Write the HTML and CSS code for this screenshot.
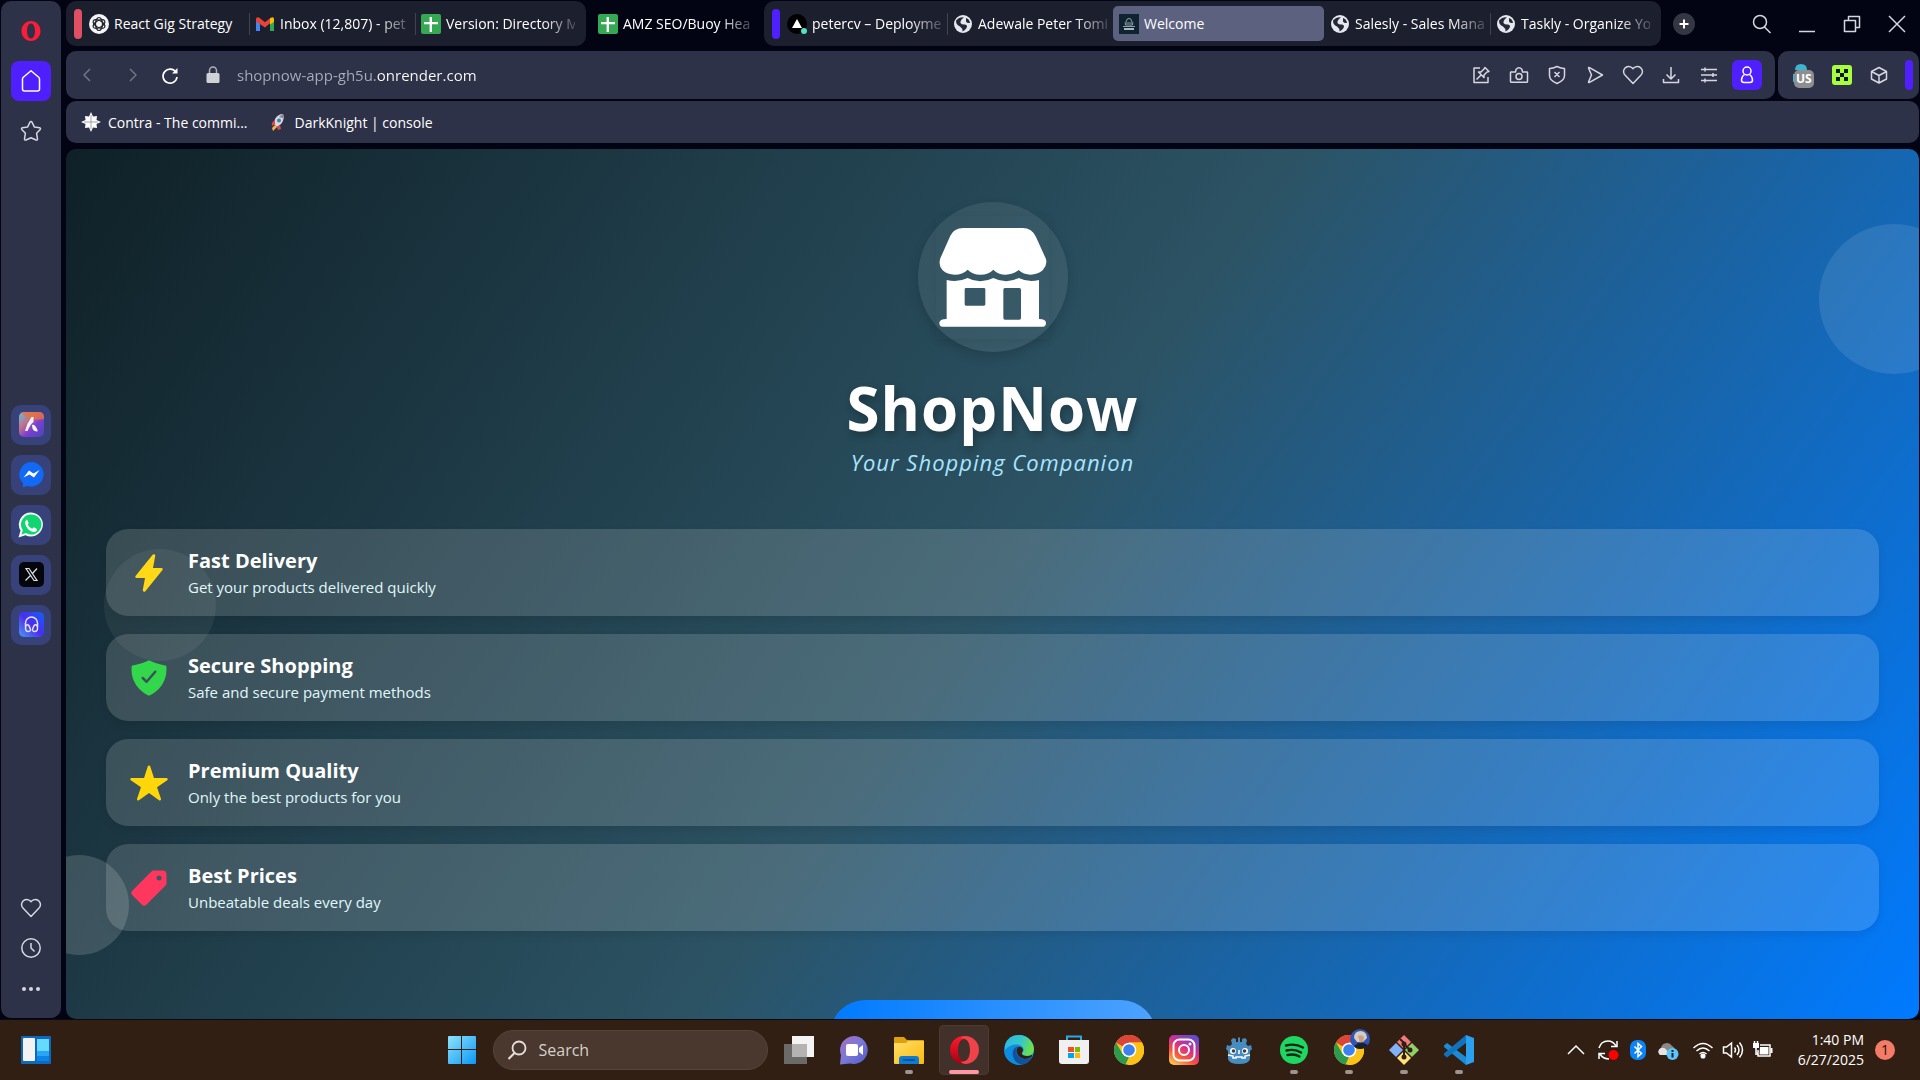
FILE: index.html
```html
<!DOCTYPE html>
<html lang="en">
<head>
<meta charset="utf-8">
<title>Welcome</title>
<link rel="stylesheet" href="styles.css">
</head>
<body>
<svg class="defs" width="0" height="0" aria-hidden="true">
  <defs>
    <linearGradient id="g-start" x1="0" y1="0" x2="1" y2="1"><stop offset="0" stop-color="#8fe2fb"/><stop offset="1" stop-color="#0a98f5"/></linearGradient>
    <linearGradient id="g-insta" x1=".2" y1="1" x2=".8" y2="0"><stop offset="0" stop-color="#ffc24a"/><stop offset=".3" stop-color="#f9553a"/><stop offset=".6" stop-color="#cf2f93"/><stop offset="1" stop-color="#5a4fd0"/></linearGradient>
    <linearGradient id="g-edge" x1="0" y1="0" x2="1" y2=".3"><stop offset="0" stop-color="#2bb4e8"/><stop offset=".6" stop-color="#36c8c8"/><stop offset="1" stop-color="#6be04e"/></linearGradient>
    <linearGradient id="g-opera" x1="0" y1="0" x2="0" y2="1"><stop offset="0" stop-color="#ff1b2d"/><stop offset="1" stop-color="#a70014"/></linearGradient>
    <linearGradient id="g-chat" x1="0" y1="0" x2="1" y2="1"><stop offset="0" stop-color="#a56fc0"/><stop offset=".5" stop-color="#7a78d8"/><stop offset="1" stop-color="#5059c9"/></linearGradient>
    <linearGradient id="g-folder" x1="0" y1="0" x2="1" y2="1"><stop offset="0" stop-color="#ffdf6b"/><stop offset="1" stop-color="#fbb90c"/></linearGradient>
    <linearGradient id="g-aria" x1="0" y1="0" x2="1" y2="1"><stop offset="0" stop-color="#5fc4dc"/><stop offset=".35" stop-color="#c0708c"/><stop offset=".6" stop-color="#7a3fd0"/><stop offset="1" stop-color="#4747b8"/></linearGradient>
    <linearGradient id="g-player" x1="0" y1="1" x2="1" y2="0"><stop offset="0" stop-color="#4a9cf0"/><stop offset=".5" stop-color="#4b2df0"/><stop offset="1" stop-color="#0f62f5"/></linearGradient>
    <symbol id="globe" viewBox="0 0 20 20"><circle cx="10" cy="10" r="9" fill="#e6e8ee"/><path d="M3 6.500Q7 2 11 3.500Q7 6 7.500 9Q9 11 12 10.500Q15 11 13.500 14Q12 16.500 9.500 17.500Q9.500 14 7 12.500Q3 11 3 6.500ZM13 4Q16.500 5 17 9Q14 9.500 13 7.500Z" fill="#242838"/></symbol>
    <symbol id="sheets" viewBox="0 0 20 20"><rect width="20" height="20" rx="2" fill="#34a853"/><path d="M8.600 3h2.400v5h6v2.200h-6V18H8.600v-7.800H3V8h5.600z" fill="#fff"/></symbol>
    <symbol id="chrome" viewBox="0 0 30 30"><circle cx="15" cy="15" r="15" fill="#fbc116"/><path d="M15 15 2 7.500A15 15 0 0 1 28 7.500H15z" fill="#db4437"/><path d="M2 7.500 8.500 18.700 15 22 11.500 29.600A15 15 0 0 1 2 7.500z" fill="#2d9b4f"/><path d="M15 7.500H28A15 15 0 0 1 14 30L21 18.500z" fill="#fbc116"/><circle cx="15" cy="15" r="7.300" fill="#fff"/><circle cx="15" cy="15" r="5.800" fill="#3b82ee"/></symbol>
  </defs>
</svg>

<div class="desktop">
  <div class="browser">
    <nav class="sidebar">
      <button class="side-btn" type="button"><svg width="22" height="22" viewBox="0 0 22 22"><path fill-rule="evenodd" fill="#fb1c37" d="M11 1c5.500 0 9.500 4.500 9.500 10s-4 10-9.500 10S1.500 16.500 1.500 11 5.500 1 11 1zm0 2.500c-2.500 0-4 3.300-4 7.500s1.500 7.500 4 7.500 4-3.300 4-7.500-1.500-7.500-4-7.500z"/></svg></button>
      <button class="side-btn side-home" type="button"><svg class="line" width="24" height="24" viewBox="0 0 24 24"><path d="M3.500 10Q3.500 9 4.300 8.300L12 1.800l7.700 6.500q.8.700.8 1.700v10q0 2-2 2h-13q-2 0-2-2z"/></svg></button>
      <button class="side-btn" type="button"><svg class="line" width="24" height="24" viewBox="0 0 24 24"><path d="M12 2.500q.7 0 1 .7l2.300 4.700 5.300.8q1.400.5.600 1.700l-3.600 3.900.9 5.600q0 1.600-1.500 1.100L12 18.700 7 21q-1.500.5-1.500-1.100l.9-5.600-3.600-3.900q-.8-1.200.6-1.700l5.300-.8L11 3.200q.3-.7 1-.7z"/></svg></button>
      <div class="side-apps">
        <button class="side-btn side-app" type="button"><svg width="25" height="25" viewBox="0 0 25 25"><rect width="25" height="25" rx="5" fill="url(#g-aria)"/><path d="M5 0h15q5 0 5 5v2Q12 10 2 1q1-1 3-1z" fill="#e8703f" opacity=".8"/><path d="M12.500 5h2v5q-3 2-6 9H6q2-8 6.500-14zM13 13q3-1 5.500 5v1.500Q13 20 13 13z" fill="#f3f3f8"/></svg></button>
        <button class="side-btn side-app" type="button"><svg width="25" height="25" viewBox="0 0 25 25"><path d="M12.500 0a12.300 12.300 0 1 1-4 24L4 25.200V21A12.300 12.300 0 0 1 12.500 0z" fill="#1169f5"/><path d="M4.500 15.500 10 8.500l4.500 3L20.500 8 15 15.500 10.500 12.500z" fill="#fff"/></svg></button>
        <button class="side-btn side-app" type="button"><svg width="26" height="26" viewBox="0 0 26 26"><path d="M13.500.5a12 12 0 1 1-6 22.700L.5 25.500l2-7A12 12 0 0 1 13.500.5z" fill="#f4f6f8"/><path d="M13.500 2.500a10 10 0 1 1-5.500 18.400L3.500 22.500l1.300-4.300A10 10 0 0 1 13.500 2.500z" fill="#0fd670"/><path d="M9 7.500l1.700 3.500-1 1.500q1.300 3 4.500 4.300l1.500-1.500 3.300 1.700q0 3-3.500 3Q8.500 18.500 7 11q0-2.500 2-3.500z" fill="#fff"/></svg></button>
        <button class="side-btn side-app" type="button"><svg width="25" height="25" viewBox="0 0 25 25"><rect width="25" height="25" rx="5" fill="#05060b"/><path d="M7 6.500h3l8 12h-3zM18 6.500l-5 5.500M11.500 13.500l-5 5" fill="none" stroke="#dfe1e8" stroke-width="1.200"/></svg></button>
        <button class="side-btn side-app" type="button"><svg width="25" height="25" viewBox="0 0 25 25"><rect width="25" height="25" rx="5" fill="url(#g-player)"/><path d="M6.500 15v-4a6 6 0 0 1 12 0v4M9.500 13q-3-.8-3 3t3 3.500 1.500-3.500-1.500-3zM15.500 13q3-.8 3 3t-3 3.500-1.500-3.500 1.500-3z" fill="none" stroke="#e7e2ff" stroke-width="1.500"/></svg></button>
      </div>
      <div class="side-foot">
        <button class="side-btn" type="button"><svg class="line" width="22" height="22" viewBox="0 0 22 22"><path d="M11 19.500 3.200 11.300a5 5 0 0 1 6.800-7.500l1 1 1-1a5 5 0 0 1 6.800 7.500z"/></svg></button>
        <button class="side-btn" type="button"><svg class="line" width="22" height="22" viewBox="0 0 22 22"><circle cx="11" cy="11" r="9.200"/><path d="M11 6v5l3.500 3.500"/></svg></button>
        <button class="side-btn" type="button"><svg width="22" height="22" viewBox="0 0 22 22" fill="#d5d7e0"><circle cx="4" cy="12" r="2"/><circle cx="11" cy="12" r="2"/><circle cx="18" cy="12" r="2"/></svg></button>
      </div>
    </nav>

    <div class="main">
      <header class="tabstrip">
        <div class="tab-group">
          <span class="group-mark group-red"></span>
          <button class="tab" type="button"><svg width="20" height="20" viewBox="0 0 20 20"><circle cx="10" cy="10" r="10" fill="#f5f5f7"/><g fill="none" stroke="#22242c" stroke-width="1.200"><ellipse cx="10" cy="10" rx="3.500" ry="6.500"/><ellipse cx="10" cy="10" rx="3.500" ry="6.500" transform="rotate(60 10 10)"/><ellipse cx="10" cy="10" rx="3.500" ry="6.500" transform="rotate(120 10 10)"/></g></svg><span class="tab-label">React Gig Strategy</span></button>
          <button class="tab tab-ruled" type="button"><svg width="20" height="20" viewBox="0 0 20 20"><path d="M1 4.500V17h4V9z" fill="#4285f4"/><path d="M19 4.500V17h-4V9z" fill="#34a853"/><path d="M1 5.500Q1 2.500 4 3.500l6 4.800 5-4v5l-5 4.200L1 7.500z" fill="#ea4335"/><path d="M15 4.300Q19 1.500 19 5.500v2.200l-4 2.800z" fill="#fbbc04"/></svg><span class="tab-label tab-fade">Inbox (12,807) - pet</span></button>
          <button class="tab tab-ruled" type="button"><svg width="20" height="20"><use href="#sheets"/></svg><span class="tab-label tab-fade">Version: Directory M</span></button>
        </div>
        <button class="tab" type="button"><svg width="20" height="20"><use href="#sheets"/></svg><span class="tab-label tab-fade">AMZ SEO/Buoy Hea</span></button>
        <div class="tab-group">
          <span class="group-mark group-violet"></span>
          <button class="tab" type="button"><svg width="20" height="20" viewBox="0 0 20 20"><circle cx="10" cy="10" r="10" fill="#000"/><path d="M10 5l5 9H5z" fill="#fff"/><circle cx="17" cy="17" r="3" fill="#50e3c2"/></svg><span class="tab-label tab-fade">petercv – Deployme</span></button>
          <button class="tab tab-ruled" type="button"><svg width="20" height="20"><use href="#globe"/></svg><span class="tab-label tab-fade">Adewale Peter Tomi</span></button>
          <button class="tab tab-active" type="button"><svg width="20" height="20" viewBox="0 0 20 20"><rect width="20" height="20" fill="#0f2430"/><path d="M6.500 11q-1-3 1-4 0-2.500 2.500-2.500t2.500 2.500q2 1 1 4zM7 9h6M4 12.500h12" fill="none" stroke="#8fa3ad"/><path d="M5 15h10" stroke="#dfe8ec" stroke-width="1.500"/></svg><span class="tab-label">Welcome</span></button>
          <button class="tab" type="button"><svg width="20" height="20"><use href="#globe"/></svg><span class="tab-label tab-fade">Salesly - Sales Mana</span></button>
          <button class="tab tab-ruled" type="button"><svg width="20" height="20"><use href="#globe"/></svg><span class="tab-label tab-fade">Taskly - Organize Yo</span></button>
        </div>
        <button class="new-tab" type="button"><svg width="22" height="22" viewBox="0 0 22 22"><circle cx="11" cy="11" r="11" fill="#343743"/><path d="M11 6.500v9M6.500 11h9" stroke="#fff" stroke-width="2"/></svg></button>
        <div class="window-btns">
          <button class="icon-btn" type="button"><svg class="line" width="22" height="22" viewBox="0 0 22 22"><circle cx="9" cy="9" r="6.500"/><path d="M13.500 14l6 6"/></svg></button>
          <button class="icon-btn" type="button"><svg class="line" width="22" height="22" viewBox="0 0 22 22"><path d="M3 18.500h16"/></svg></button>
          <button class="icon-btn" type="button"><svg class="line" width="22" height="22" viewBox="0 0 22 22"><path d="M3.500 7.500h11v11h-11zM7.500 7V3.500h11v11H15"/></svg></button>
          <button class="icon-btn" type="button"><svg class="line" width="22" height="22" viewBox="0 0 22 22"><path d="M3 3l16 16M19 3L3 19"/></svg></button>
        </div>
      </header>

      <div class="toolbar">
        <div class="panel address">
          <button class="nav-btn dim" type="button"><svg class="line" width="20" height="20" viewBox="0 0 20 20"><path d="M13 4l-6 6 6 6"/></svg></button>
          <button class="nav-btn dim" type="button"><svg class="line" width="20" height="20" viewBox="0 0 20 20"><path d="M7 4l6 6-6 6"/></svg></button>
          <button class="nav-btn reload" type="button"><svg class="line" width="20" height="20" viewBox="0 0 20 20" stroke-width="1.700"><path d="M16 7.500A7 7 0 1 0 17 12"/><path d="M17.500 3v5.500h-5.500z" fill="#fff" stroke="none"/></svg></button>
          <svg class="lock" width="16" height="20" viewBox="0 0 16 20"><rect x="1.500" y="8" width="13" height="10" rx="1.500" fill="#d0d2d6"/><path d="M4.500 8V5.500a3.500 3.500 0 0 1 7 0V8" fill="none" stroke="#aeb1ba" stroke-width="1.500"/></svg>
          <input class="url" type="text" value="shopnow-app-gh5u.onrender.com" aria-label="shopnow-app-gh5u.onrender.com">
          <div class="tools">
            <button class="icon-btn" type="button"><svg class="line" width="20" height="20" viewBox="0 0 20 20"><path d="M9 3H3v14.500h14V12M14 2.500l4 4-2 .5-3 3v2.500L7.500 7H10l3-3zM10 10l-4.500 4.500"/></svg></button>
            <button class="icon-btn" type="button"><svg class="line" width="20" height="20" viewBox="0 0 20 20"><path d="M2 7h4.500L7 4.500Q10 1 13 4.500l.5 2.500H18q.5 0 .5.500v9q0 .8-1 .8h-15q-1 0-1-.8v-9Q1.500 7 2 7z"/><circle cx="10" cy="11.500" r="3"/></svg></button>
            <button class="icon-btn" type="button"><svg class="line" width="20" height="20" viewBox="0 0 20 20"><path d="M10 1.500q4 2 7.500 2v7q0 5-7.500 8-7.500-3-7.500-8v-7q3.500 0 7.500-2zM7.500 7l5 5M12.500 7l-5 5"/></svg></button>
            <button class="icon-btn" type="button"><svg class="line" width="20" height="20" viewBox="0 0 20 20"><path d="M3.500 3q0-.8 1-.3l13 7.300-13 7.300q-1 .5-1-.3L6.500 10z"/></svg></button>
            <button class="icon-btn" type="button"><svg class="line" width="22" height="22" viewBox="0 0 22 22"><path d="M11 19.500 3.200 11.300a5 5 0 0 1 6.800-7.500l1 1 1-1a5 5 0 0 1 6.800 7.500z"/></svg></button>
            <button class="icon-btn" type="button"><svg class="line" width="20" height="20" viewBox="0 0 20 20"><path d="M10 2v12M5.500 9.500l4.500 4.500 4.500-4.500M2.500 14v3.500h15V14"/></svg></button>
            <button class="icon-btn" type="button"><svg class="line" width="20" height="20" viewBox="0 0 20 20"><path d="M2 4.500h16M2 10h16M2 15.500h16M6 2.500v4M14 8v4M6 13.500v4"/></svg></button>
            <button class="icon-btn profile" type="button"><svg class="line" width="20" height="20" viewBox="0 0 20 20"><circle cx="10" cy="6" r="4"/><path d="M7.500 9.500q-3 2-3 5.500 0 2.500 2.500 2.500h6q2.500 0 2.500-2.500 0-3.500-3-5.500"/></svg></button>
          </div>
        </div>
        <div class="panel extensions">
          <button class="icon-btn" type="button"><svg width="26" height="26" viewBox="0 0 26 26"><path d="M5 8q0-6 6-6t6 6zM3 12h2v8H3z" fill="#3db5cd"/><rect x="4" y="8" width="20" height="18" rx="5" fill="#8d8e92"/></svg><span class="ext-tag">US</span></button>
          <button class="icon-btn" type="button"><svg width="20" height="20" viewBox="0 0 20 20"><rect width="20" height="20" rx="3" fill="#a6ff3d"/><path d="M4 4h4v4H4zM12 4h4v4h-4zM8 8h4v4H8zM4 12h4v4H4zM12 12h4v4h-4z" fill="#10180a"/></svg></button>
          <button class="icon-btn" type="button"><svg class="line" width="20" height="20" viewBox="0 0 20 20"><path d="M10 2.500l7.500 4v7.500L10 18l-7.500-4V6.500zM2.500 6.500L10 10.500l7.500-4M10 10.500V18"/></svg></button>
          <span class="group-mark group-violet"></span>
        </div>
      </div>

      <div class="panel bookmarks">
        <a class="bookmark" href="#contra"><svg width="20" height="20" viewBox="0 0 20 20"><path d="M10 0l2 4.500 4-.5-.5 4L20 10l-4.500 2 .5 4-4-.5L10 20l-2-4.500-4 .5.500-4L0 10l4.500-2L4 4l4 .5z" fill="#fff"/><path d="M10 3v14M3 10h14" stroke="#8a8d9c" stroke-width=".8"/></svg>Contra - The commi...</a>
        <a class="bookmark" href="#darkknight"><svg width="20" height="20" viewBox="0 0 20 20"><path d="M15 2q2 5-2 10l-4 3-3-3 1-5q3-5 8-5z" fill="#d9d9dc"/><path d="M15 2q1 2 .5 4.500L11 5q1.500-2 4-3z" fill="#8b8794"/><circle cx="11" cy="8.500" r="2" fill="#3b7dc0"/><path d="M7 8q-4 2-3 6l3-2zM12 13l1 4-3 1-1-3z" fill="#e0474c"/><path d="M7 13l2 2-4 4-1-3z" fill="#f7b543"/></svg>DarkKnight | console</a>
      </div>

      <main class="page">
        <span class="bubble bubble-right"></span>
        <span class="bubble bubble-mid"></span>
        <span class="bubble bubble-left"></span>
        <section class="hero">
          <div class="logo">
            <svg class="store" width="113" height="123" viewBox="348 105 339 369" fill="#fff"><path d="M430 141H608Q636 141 648 168L677 232Q684 250 668 268Q652 281 632 281Q610 281 596 267Q580 281 557 281Q534 281 520 266Q506 281 481 281Q458 281 443 266Q428 281 404 281Q382 281 368 268Q354 252 361 232L391 164Q402 141 430 141Z"/><path fill-rule="evenodd" d="M380 297Q414 305 443 291Q480 311 520 291Q560 311 596 291Q625 305 657 297V414Q678 414 678 426Q678 437 668 437H368Q358 437 358 426Q358 414 380 414ZM438 321H492Q496 321 496 325V370Q496 374 492 374H438Q434 374 434 370V325Q434 321 438 321ZM555 321H598Q603 321 603 326V411Q603 416 598 416H555Q550 416 550 411V326Q550 321 555 321Z"/></svg>
          </div>
          <h1 class="brand">ShopNow</h1>
          <p class="tagline">Your Shopping Companion</p>
        </section>
        <ul class="features">
          <li class="feature">
            <svg width="40" height="40" viewBox="0 0 512 512" fill="#ffd60a"><path d="M194.820 496a18.360 18.360 0 01-18.100-21.530v-.11L204.830 320H96a16 16 0 01-12.440-26.060L302.730 23a18.450 18.450 0 0132.800 13.710c0 .3-.08.59-.13.89L307.190 192H416a16 16 0 0112.440 26.060L209.240 489a18.450 18.450 0 01-14.420 7z"/></svg>
            <div><h2 class="feature-title">Fast Delivery</h2><p class="feature-text">Get your products delivered quickly</p></div>
          </li>
          <li class="feature">
            <svg width="40" height="40" viewBox="0 0 512 512" fill="#32d74b"><path d="M479.070 111.360a16 16 0 00-13.150-14.740c-86.500-15.520-122.610-26.740-203.330-63.200a16 16 0 00-13.180 0C168.690 69.880 132.580 81.100 46.080 96.620a16 16 0 00-13.150 14.740c-3.850 61.110 4.360 118.050 24.430 169.240A349.470 349.470 0 00129 393.110c53.470 56.730 110.240 81.370 121.070 85.730a16 16 0 0012 0c10.830-4.360 67.600-29 121.070-85.730a349.470 349.470 0 0071.500-112.510c20.070-51.190 28.280-108.130 24.430-169.240zm-131 75.110l-110.800 128a16 16 0 01-11.410 5.530h-.66a16 16 0 01-11.200-4.570l-49.200-48.200a16 16 0 0122.400-22.860l37 36.290 99.700-115.130a16 16 0 0124.200 20.940z"/></svg>
            <div><h2 class="feature-title">Secure Shopping</h2><p class="feature-text">Safe and secure payment methods</p></div>
          </li>
          <li class="feature">
            <svg width="40" height="40" viewBox="0 0 512 512" fill="#ffd60a"><path d="M394 480a16 16 0 01-9.390-3L256 383.760 127.390 477a16 16 0 01-24.550-18.080L153 310.350 23 221.200a16 16 0 019-29.200h160.380l48.400-148.950a16 16 0 0130.440 0l48.400 149H480a16 16 0 019.050 29.200L359 310.350l50.130 148.530A16 16 0 01394 480z"/></svg>
            <div><h2 class="feature-title">Premium Quality</h2><p class="feature-text">Only the best products for you</p></div>
          </li>
          <li class="feature">
            <svg width="40" height="40" viewBox="0 0 512 512" fill="#ff375f"><path d="M467 45.200A44.450 44.450 0 00435.290 32H312.360a30.630 30.630 0 00-21.520 8.890L45.090 286.590a44.820 44.820 0 000 63.320l117 117a44.830 44.830 0 0063.340 0l245.650-245.600A30.600 30.600 0 00480 199.800v-123a44.240 44.240 0 00-13-31.600zM384 160a32 32 0 1132-32 32 32 0 01-32 32z"/></svg>
            <div><h2 class="feature-title">Best Prices</h2><p class="feature-text">Unbeatable deals every day</p></div>
          </li>
        </ul>
        <button class="cta" type="button"></button>
      </main>
    </div>
  </div>

  <footer class="taskbar">
    <div class="task-left">
      <button class="task-widget" type="button"><svg width="30" height="28" viewBox="0 0 30 28"><rect width="30" height="28" rx="1" fill="#0f68bd"/><rect x="2" y="2" width="12" height="23" rx="1" fill="#f3f3f3"/><path d="M16 3h12v12H16z" fill="#66d9ff"/><path d="M16 15h12v5H16z" fill="#2aa5f5"/><path d="M16 20h12v5H16z" fill="#0b84e8"/></svg></button>
    </div>
    <div class="task-center">
      <button class="task-btn" type="button"><svg width="30" height="30" viewBox="0 0 30 30" fill="url(#g-start)"><path d="M1 2q0-1 1-1h12v13H1zM15 1h13q1 0 1 1v12H15zM1 15h13v14H2q-1 0-1-1zM15 15h14v13q0 1-1 1H15z"/></svg></button>
      <label class="task-search"><svg width="20" height="20" viewBox="0 0 20 20"><circle cx="12" cy="8" r="6.500" fill="none" stroke="#e3dfdc" stroke-width="1.800"/><path d="M7.500 13l-6 6" stroke="#e3dfdc" stroke-width="2.200"/></svg><input class="task-input" type="text" placeholder="Search"></label>
      <div class="task-apps">
        <button class="task-btn" type="button"><svg width="30" height="30" viewBox="0 0 30 30"><path d="M0 9h23v20H0z" fill="#6c6a69"/><path d="M8 1h22v21H8z" fill="#f4f4f4"/><path d="M8 9h15v13H8z" fill="#b5b3b2"/></svg></button>
        <button class="task-btn" type="button"><svg width="30" height="30" viewBox="0 0 30 30"><path d="M15 1a14 14 0 1 1-4 27.500L1 29.500 2 20A14 14 0 0 1 15 1z" fill="url(#g-chat)"/><rect x="7" y="9" width="12" height="12" rx="2" fill="#fff"/><path d="M20 13l4-3v10l-4-3z" fill="#fff"/></svg></button>
        <button class="task-btn running" type="button"><svg width="30" height="30" viewBox="0 0 30 30"><path d="M0 3q0-1 1-1h9l3 3h16q1 0 1 1v10H0z" fill="#dfa00f"/><path d="M0 8h12l2-2h16v22q0 1-1 1H1q-1 0-1-1z" fill="url(#g-folder)"/><path d="M5 29v-5q0-3 3-3h14q3 0 3 3v5z" fill="#0f7ad1"/><path d="M9 25h12" stroke="#064b8b" stroke-width="1.500"/></svg></button>
        <button class="task-btn focused" type="button"><svg width="30" height="30" viewBox="0 0 30 30"><path fill-rule="evenodd" fill="url(#g-opera)" d="M15 1a14 14 0 1 1 0 28 14 14 0 1 1 0-28zm0 3c-4 0-6 5-6 11s2 11 6 11 6-5 6-11-2-11-6-11z"/><path d="M16 1a14 14 0 0 1 0 28q-3-.3-4.500-2.200Q14 27 16 26c3-1 5-5 5-11s-2-10-5-11q-2-1-4.500-.8Q13 1.300 16 1z" fill="#f0424a"/></svg></button>
        <button class="task-btn" type="button"><svg width="30" height="30" viewBox="0 0 30 30"><circle cx="15" cy="15" r="15" fill="#0e8ce0"/><path d="M1 10Q4 0 15 0a15 15 0 0 1 15 14q0 7-7 7-5 0-5-3 2-1.500 1.500-4-1-4-6-4.500Q6 9 1 15z" fill="url(#g-edge)"/><path d="M8.500 19Q9 12 14 11.500q-3 3-1.500 7Q15 24 21 24q3 0 7-2-3 6.500-9 7.500Q10 29 8.500 19z" fill="#0f529e"/><path d="M19 14.500q0 2-1.200 3.500 0 3 5.200 3 3 0 5-1.300v1.800q-8 5-13.500-.5Q10.500 16 14 12q4-1 5 2.500z" fill="#321f14"/></svg></button>
        <button class="task-btn" type="button"><svg width="30" height="30" viewBox="0 0 30 30"><path d="M8 6V1.500h14V6" fill="none" stroke="#2aa9e8" stroke-width="2"/><path d="M0 5h30v21q0 3-3 3H3q-3 0-3-3z" fill="#f0f0f0"/><path d="M9 12h6v5H9z" fill="#f25022"/><path d="M16 12h5v5h-5z" fill="#7fba00"/><path d="M9 18h6v5H9z" fill="#00a4ef"/><path d="M16 18h5v5h-5z" fill="#ffb900"/></svg></button>
        <button class="task-btn" type="button"><svg width="30" height="30"><use href="#chrome"/></svg></button>
        <button class="task-btn" type="button"><svg width="30" height="30" viewBox="0 0 30 30"><rect width="30" height="30" rx="5" fill="url(#g-insta)"/><g fill="none" stroke="#fff" stroke-width="2"><rect x="4.500" y="4.500" width="21" height="21" rx="6"/><circle cx="15" cy="15" r="5"/></g><circle cx="21" cy="9" r="1.500" fill="#fff"/></svg></button>
        <button class="task-btn" type="button"><svg width="30" height="30" viewBox="0 0 30 30"><path d="M9 3l3 1v3h2V3l1-1 1 1v4h2V4l3-1 2 2-1 4 2 2 3-1 1 4-2 2v8q-1 5-11 5T4 24v-8l-2-2 1-4 3 1 2-2-1-4z" fill="#478cbf"/><circle cx="9" cy="16" r="3" fill="#fff"/><circle cx="21" cy="16" r="3" fill="#fff"/><circle cx="9.500" cy="16" r="1.800" fill="#414042"/><circle cx="20.500" cy="16" r="1.800" fill="#414042"/><path d="M15 15v4M4 20l5 1v2h3v-1h6v1h3v-2l5-1" fill="none" stroke="#fff" stroke-width="1.500"/></svg></button>
        <button class="task-btn running" type="button"><svg width="30" height="30" viewBox="0 0 30 30"><circle cx="15" cy="15" r="14" fill="#1ed760"/><path d="M7 10.500q9-2.500 17 2M7.500 15.500q8-2 14.500 2M8.500 20q7-1.500 12 1.500" fill="none" stroke="#14251a" stroke-width="2.400" stroke-linecap="round"/></svg></button>
        <button class="task-btn running has-avatar" type="button"><svg width="30" height="30"><use href="#chrome"/></svg><svg class="avatar" width="20" height="20" viewBox="0 0 20 20"><circle cx="10" cy="10" r="10" fill="#3156b8"/><path d="M4 9q0-7 7-7 6 1 6 7l-4 4H7z" fill="#d6cdbf"/><path d="M8 7q4-2 6 1l-1 5-3 1z" fill="#c89f88"/><path d="M4 17q5-5 10-3l4 2q-3 4-8 4-4 0-6-3z" fill="#1c2130"/></svg></button>
        <button class="task-btn running" type="button"><svg width="30" height="30" viewBox="0 0 30 30"><path d="M15 0l7 7-7 7-7-7z" fill="#f4797c"/><path d="M7 8l7 7-7 7-7-7z" fill="#82b1f8"/><path d="M23 8l7 7-7 7-7-7z" fill="#8fd06a"/><path d="M15 16l7 7-7 7-7-7z" fill="#ffe07a"/><path d="M11 4l4 4v14M15 9l6 6" fill="none" stroke="#321f14" stroke-width="2"/><g fill="#321f14"><circle cx="15" cy="9" r="2.500"/><circle cx="15" cy="22" r="2.500"/><circle cx="21" cy="15" r="2.500"/></g></svg></button>
        <button class="task-btn running" type="button"><svg width="30" height="30" viewBox="0 0 30 30"><path d="M22 8v14L13 15z" fill="#321f14"/><path d="M0 10.500 3 8l19 14v8L0 12z" fill="#1c8ad4"/><path d="M22 0v8L3 22.500 0 20v-1.500z" fill="#0f74bd"/><path d="M22 0l8 3v24l-8 3z" fill="#2aa0ee"/></svg></button>
      </div>
    </div>
    <div class="task-tray">
      <svg class="tray-icon" width="20" height="20" viewBox="0 0 20 20"><path d="M2 14l8-8 8 8"/></svg>
      <svg class="tray-icon" width="22" height="22" viewBox="0 0 22 22"><path d="M2 9Q4 2 11 2q5 0 8 5M20 2v5.500h-6M12 20q-6 0-9-5M2 20v-5.500h6"/><circle cx="16.500" cy="16" r="5" fill="#f00" stroke="none"/></svg>
      <svg class="tray-icon" width="16" height="20" viewBox="0 0 16 20"><rect width="16" height="20" rx="7" fill="#0a84f7" stroke="none"/><path d="M4.500 6.500l7 7L8 16.500v-13l3.500 3-7 7"/></svg>
      <svg class="tray-icon" width="22" height="20" viewBox="0 0 22 20"><path d="M3 15a4 4 0 0 1 1-7 6 6 0 0 1 11-2 4 4 0 0 1 2 6l-4 3z" fill="#8b8a89" stroke="none"/><path d="M3 15a4 4 0 0 1 1-7q4-1 6 3l3 4z" fill="#e4e4e4" stroke="none"/><circle cx="15.500" cy="14" r="6" fill="#5cc5fa" stroke="none"/><path d="M15.500 13v4.500M15.500 10v2" stroke="#10222c" stroke-width="2"/></svg>
      <div class="tray-group">
        <svg class="tray-icon" width="22" height="20" viewBox="0 0 22 20"><path d="M1.500 8q9.500-9 19 0M4.500 11q6.500-6 13 0M7.500 14q3.500-3 7 0"/><circle cx="11" cy="16" r="1.800" fill="#fff"/></svg>
        <svg class="tray-icon" width="22" height="20" viewBox="0 0 22 20"><path d="M1.500 7v6h3l5 4V3l-5 4zM12.500 7.500q2 2.500 0 5M15 5q4 5 0 10M17.500 2.500q6 7.500 0 15"/></svg>
        <svg class="tray-icon" width="22" height="20" viewBox="0 0 22 20"><path d="M6 10v6h12V5H8"/><path d="M8 7h8.500v7.500h-9zM18.500 8h2v5h-2zM1 3h6v5H1zM3.500 8h1v7h2" fill="#fff" stroke="none"/><path d="M2.500 3V1M5.500 3V1M4 8v7"/></svg>
      </div>
      <div class="clock"><span>1:40 PM</span><span>6/27/2025</span></div>
      <span class="notice">1</span>
    </div>
  </footer>
</div>
</body>
</html>
```
FILE: styles.css
```css
* { box-sizing: border-box; }
body { margin: 0; background: #020414; color: #fff; font-family: "Open Sans", "Noto Sans", sans-serif; font-size: 14px; }
h1, h2, p, ul { margin: 0; padding: 0; }
ul { list-style: none; }
button, input { font: inherit; color: inherit; border: 0; padding: 0; background: none; }
svg { display: block; flex: none; }
a { color: inherit; text-decoration: none; }
.defs { position: absolute; }
.line { fill: none; stroke: #d5d7e0; stroke-width: 1.5; stroke-linejoin: round; }

.desktop { display: grid; grid-template-columns: minmax(0, 1fr); grid-template-rows: minmax(0, 1fr) auto; height: 100vh; overflow: hidden; }
.browser { display: flex; min-height: 0; padding: 1px 1px 0; gap: 5px; }

/* sidebar */
.sidebar { display: flex; flex-direction: column; align-items: center; width: 60px; margin-bottom: 1px; padding: 10px 0; gap: 10px; background: #2e3248; border-radius: 10px; }
.side-btn { display: flex; align-items: center; justify-content: center; width: 40px; height: 40px; border-radius: 8px; }
.side-home { background: #4f1fff; }
.side-home .line { stroke: #fff; }
.side-apps { display: flex; flex-direction: column; gap: 10px; margin: auto 0; padding-top: 10px; }
.side-app { background: #38427a; border-radius: 10px; }
.side-foot { display: flex; flex-direction: column; }

/* tab strip */
.main { display: flex; flex-direction: column; flex: 1; min-width: 0; }
.tabstrip { display: flex; align-items: center; height: 45px; gap: 6px; }
.tab-group { display: flex; align-items: center; height: 45px; padding: 0 5px 0 8px; background: #1c1f2e; border-radius: 10px; }
.group-mark { width: 8px; height: 30px; margin-right: 1px; border-radius: 4px; }
.group-red { background: #e04f63; }
.group-violet { background: #4f1fff; }
.tab { display: flex; align-items: center; flex: none; width: 166px; height: 35px; padding: 0 6px; gap: 5px; border-radius: 5px; text-align: left; }
.tab-label { flex: 1; min-width: 0; white-space: nowrap; line-height: 22px; }
.tab-fade { mask-image: linear-gradient(90deg, #000 75%, rgba(0, 0, 0, .2)); }
.tab-ruled { background: linear-gradient(#41444f, #41444f) left center / 1px 22px no-repeat; }
.tab-active { width: 211px; background: #5c6180; }
.new-tab { margin: 0 6px; }
.window-btns { display: flex; gap: 23px; margin-left: auto; padding-right: 11px; }
.icon-btn { display: flex; align-items: center; justify-content: center; position: relative; }

/* toolbar */
.panel { background: #2e3248; border-radius: 10px; }
.toolbar { display: flex; gap: 3px; height: 48px; margin-top: 5px; }
.address { display: flex; align-items: center; flex: 1; min-width: 0; padding: 0 13px 0 11px; }
.nav-btn { display: flex; margin-right: 26px; }
.dim { opacity: .4; }
.reload { margin-right: 25px; margin-left: -9px; }
.reload .line { stroke: #fff; stroke-width: 1.7; }
.lock { margin-right: 16px; }
.url { flex: 1; min-width: 0; height: 30px; font-size: 15px; color: transparent; background: linear-gradient(90deg, #a9adbd 140px, #fff 140px); background-clip: text; -webkit-background-clip: text; outline: 0; }
.tools { display: flex; align-items: center; }
.tools .icon-btn { width: 30px; height: 30px; margin-left: 8px; }
.tools .profile { background: #4f1fff; border-radius: 6px; }
.profile .line { stroke: #fff; }
.extensions { display: flex; align-items: center; justify-content: space-between; width: 141px; padding: 0 5px 0 12px; }
.ext-tag { position: absolute; left: 6px; top: 9px; font-size: 12px; font-weight: 700; line-height: 16px; }
.bookmarks { display: flex; align-items: center; gap: 20px; height: 42px; margin-top: 2px; padding: 0 15px; }
.bookmark { display: flex; align-items: center; gap: 7px; }

/* page */
.page { position: relative; flex: 1; min-height: 0; margin-top: 6px; padding: 53px 40px 0; overflow: hidden; border-radius: 10px; background: linear-gradient(125deg, #0f2027, #2c5364 50%, #007aff); }
.bubble { position: absolute; border-radius: 50%; background: rgba(255, 255, 255, .1); }
.bubble-right { top: 75px; right: -50px; width: 150px; height: 150px; }
.bubble-mid { top: 46%; left: 38px; width: 112px; height: 112px; background: rgba(255, 255, 255, .06); }
.bubble-left { bottom: 64px; left: -37px; width: 100px; height: 100px; background: rgba(255, 255, 255, .15); }
.hero { display: flex; flex-direction: column; align-items: center; text-align: center; }
.logo { display: flex; align-items: center; justify-content: center; width: 150px; height: 150px; border-radius: 50%; background: rgba(255, 255, 255, .08); box-shadow: 0 5px 12px rgba(0, 0, 0, .15); }
.store { box-shadow: 0 2px 8px rgba(0, 0, 0, .08); }
.brand { margin-top: 20px; font-size: 60px; font-weight: 700; line-height: 72px; letter-spacing: 1px; text-shadow: 2px 4px 8px rgba(0, 0, 0, .3); }
.tagline { font-size: 22px; font-style: italic; line-height: 36px; letter-spacing: 1px; color: #a8e4ff; }
.features { display: flex; flex-direction: column; gap: 18px; margin-top: 49px; }
.feature { display: flex; align-items: center; height: 87px; padding: 0 23px; gap: 19px; border-radius: 22px; background: rgba(255, 255, 255, .15); box-shadow: 0 4px 8px rgba(0, 0, 0, .08); }
.feature-title { font-size: 20px; font-weight: 700; line-height: 28px; }
.feature-text { font-size: 15px; line-height: 24px; color: #e0f7fa; }
.cta { display: block; width: 326px; height: 70px; margin: 69px auto 0; border-radius: 35px; background: linear-gradient(90deg, #007aff, #4da3ff); }

/* taskbar */
.taskbar { display: grid; grid-template-columns: 1fr auto 1fr; align-items: center; height: 61px; background: #321f14; border-top: 1px solid #0a0a12; }
.task-left { padding-left: 21px; }
.task-widget { display: block; }
.task-center { display: flex; align-items: center; gap: 6px; }
.task-btn { display: flex; align-items: center; justify-content: center; position: relative; width: 50px; height: 50px; border-radius: 5px; }
.task-search { display: flex; align-items: center; gap: 12px; width: 275px; height: 40px; padding: 0 13px; border: 1px solid #54443b; border-radius: 20px; background: #4a382e; }
.task-input { flex: 1; min-width: 0; font-size: 16px; outline: 0; }
.task-input::placeholder { color: #d6d0cc; opacity: 1; }
.task-apps { display: flex; gap: 5px; }
.focused { background: #42302a; box-shadow: inset 0 0 0 1px #4c3b33; }
.running::after, .focused::after { content: ""; position: absolute; bottom: 1px; left: 21px; width: 8px; height: 4px; border-radius: 2px; background: #9e938d; }
.focused::after { left: 10px; width: 30px; background: #ff98a5; }
.avatar { position: absolute; top: 4px; right: 4px; }
.task-tray { display: flex; align-items: center; justify-content: flex-end; gap: 11px; padding-right: 25px; }
.tray-icon { fill: none; stroke: #fff; stroke-width: 1.5; }
.tray-group { display: flex; gap: 8px; margin-left: 2px; }
.clock { display: flex; flex-direction: column; width: 79px; text-align: right; line-height: 20px; }
.notice { width: 20px; height: 20px; border-radius: 50%; background: #f47c66; color: #1d100c; line-height: 20px; text-align: center; }
```
